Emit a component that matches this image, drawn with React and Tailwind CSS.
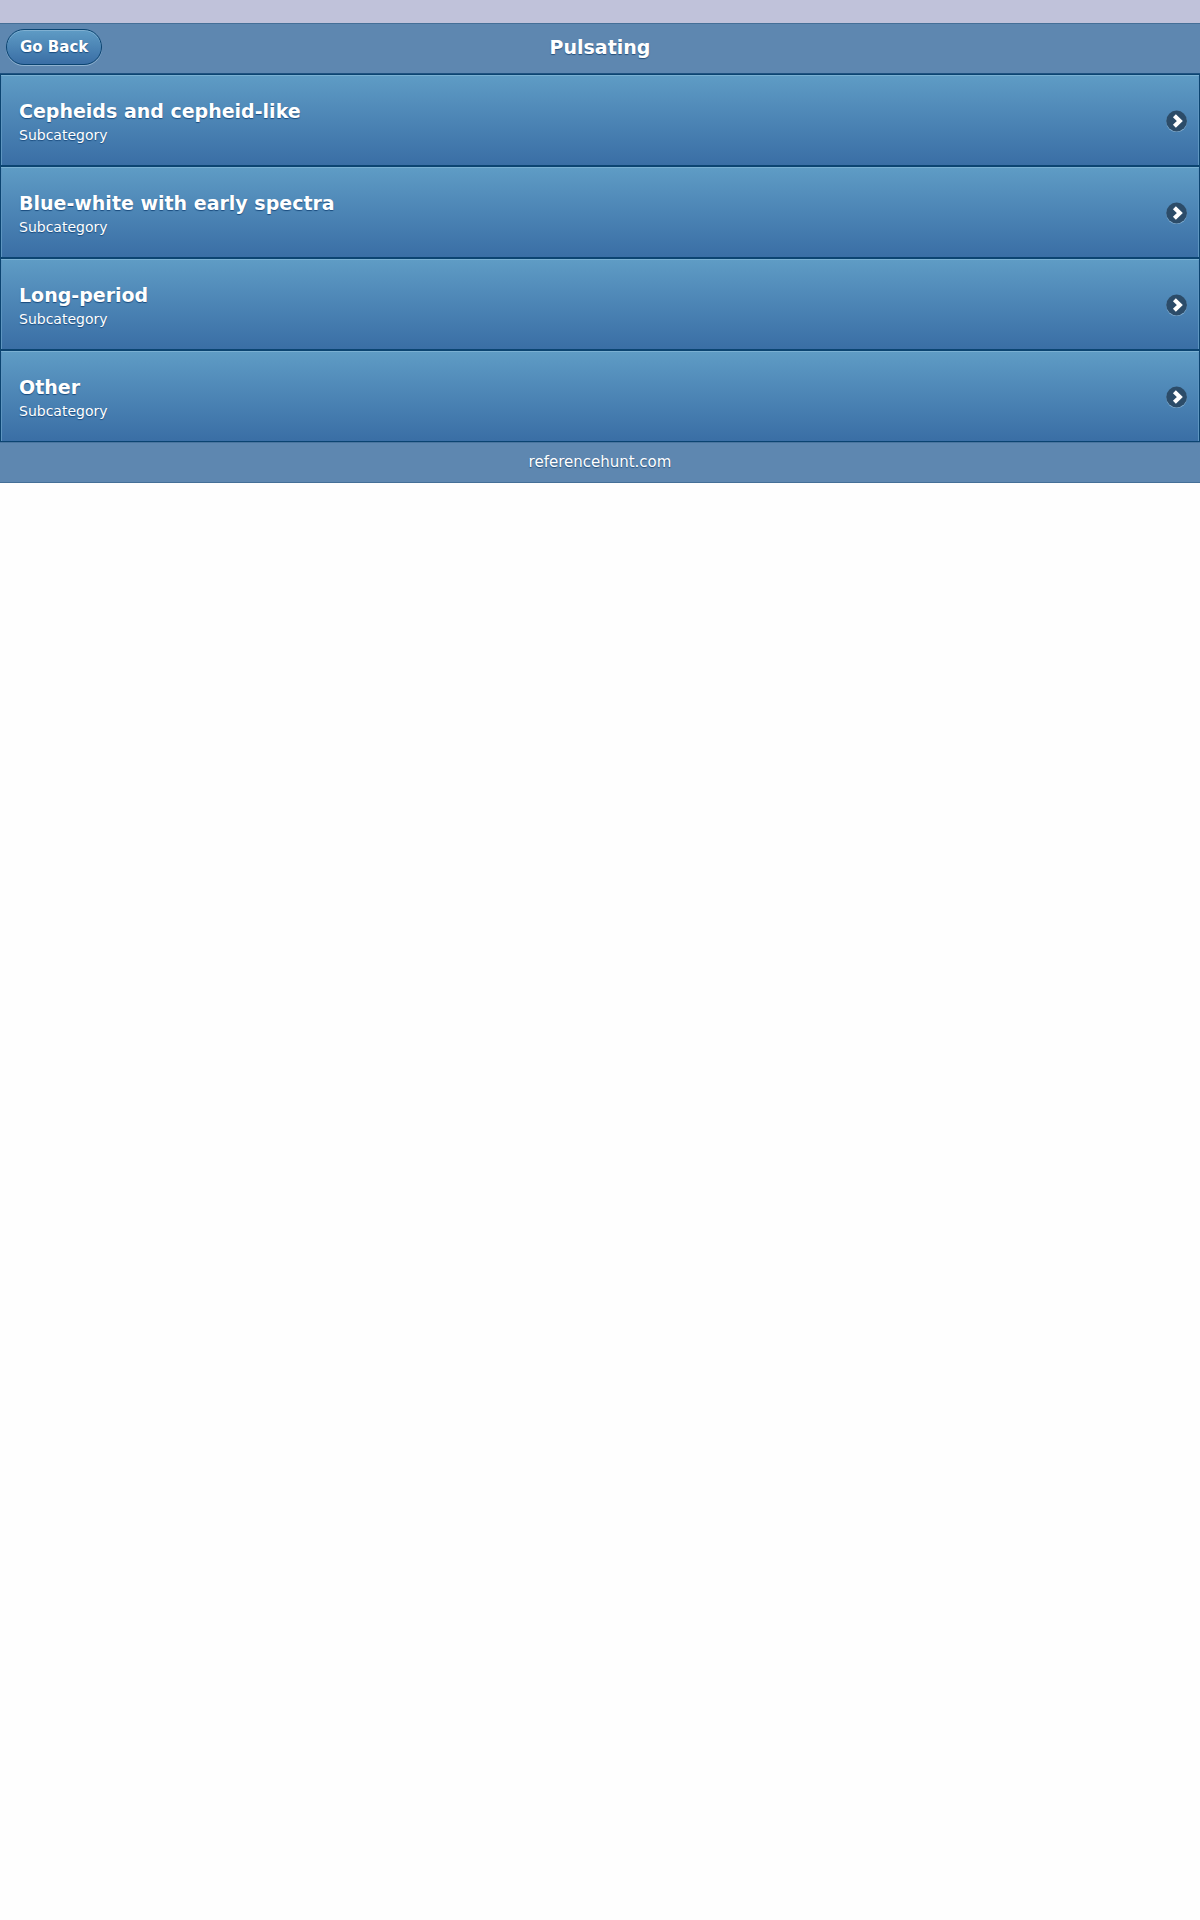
const categories = [
  "Cepheids and cepheid-like",
  "Blue-white with early spectra",
  "Long-period",
  "Other",
];

function ArrowIcon() {
  return (
    <svg viewBox="0 0 22 22" className="mt-px mr-[11px] size-[22px] shrink-0" aria-hidden="true">
      <circle cx="10.6" cy="11.8" r="10.4" fill="#8fb6d6" opacity="0.8" />
      <circle cx="10.6" cy="11" r="10.4" fill="#2c4c69" />
      <path d="M8.4 5.8 L13.8 11 L8.4 16.2" fill="none" stroke="#fff" strokeWidth="4.2" />
    </svg>
  );
}

export default function App() {
  return (
    <div className="min-h-screen bg-[#fefefe] font-['DejaVu_Sans',sans-serif] text-white">
      <div className="h-[23px] bg-[#c0c2da]" />
      <header className="grid h-[51px] grid-cols-[1fr_auto_1fr] items-center border-y border-t-[#456f97] border-b-[#1f5280] bg-[#5e87b0] px-1.5">
        <button
          type="button"
          className="mb-1 h-9 justify-self-start rounded-full border border-[#0b4471] bg-linear-to-b from-[#5f9cc5] to-[#3a6ea5] px-[13px] pt-0.5 text-[15px] font-bold shadow-[inset_0_1px_0_#7fb0d2,0_1px_0_#8fb2d0] [text-shadow:0_1px_1px_#194b7e]"
        >
          Go Back
        </button>
        <h1 className="mb-1 text-[19px] leading-6 font-bold [text-shadow:0_1px_1px_#254f7a]">Pulsating</h1>
      </header>
      <ul>
        {categories.map((name) => (
          <li key={name}>
            <a
              href="#"
              className="flex h-[92px] items-center justify-between border border-[#0b4471] bg-linear-to-b from-[#5f9cc5] to-[#3a6ea5] pl-[18px] shadow-[inset_0_1px_0_#7ab0d2,inset_1px_0_0_#5e95c0,inset_-1px_0_0_#5e95c0]"
            >
              <span className="flex flex-col pt-1.5">
                <span className="text-[19px] leading-6 font-bold [text-shadow:0_1px_1px_#194b7e]">{name}</span>
                <span className="text-sm leading-6 [text-shadow:0_1px_1px_#194b7e]">Subcategory</span>
              </span>
              <ArrowIcon />
            </a>
          </li>
        ))}
      </ul>
      <footer className="flex h-[41px] items-center justify-center border-y border-t-[#4a759f] border-b-[#456f97] bg-[#5e87b0]">
        <p className="mb-0.5 text-[15px] leading-5 [text-shadow:0_1px_1px_#254f7a]">referencehunt.com</p>
      </footer>
    </div>
  );
}
